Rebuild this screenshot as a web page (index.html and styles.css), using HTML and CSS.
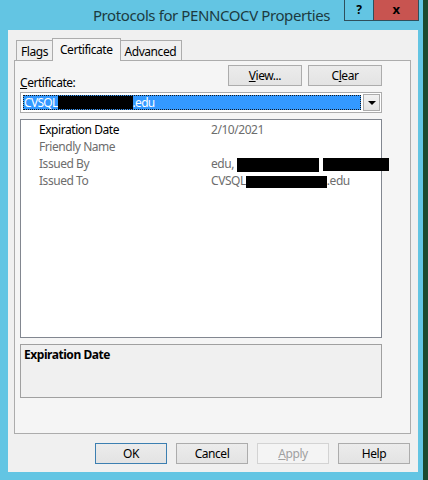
FILE: index.html
```html
<!DOCTYPE html>
<html lang="en">
<head>
    <meta charset="UTF-8">
    <title>Protocols for PENNCOCV Properties</title>
    <link rel="stylesheet" href="styles.css">
</head>
<body>
    <div class="window">
        <div class="titlebar">
            <span></span>
            <div class="title">Protocols for PENNCOCV Properties</div>
            <div class="caption-btns">
                <div class="cap cap-help">?</div>
                <div class="cap cap-close">x</div>
            </div>
        </div>

        <div class="client">
            <div class="tabs">
                <div class="tab">Flags</div>
                <div class="tab active">Certificate</div>
                <div class="tab">Advanced</div>
            </div>

            <div class="panel">
                <div class="top-row">
                    <label class="cert-label"><u>C</u>ertificate:</label>
                    <div class="top-btns">
                        <button class="btn"><u>V</u>iew...</button>
                        <button class="btn">C<u>l</u>ear</button>
                    </div>
                </div>

                <div class="combo">
                    <div class="combo-value">CVSQL<span class="redact r-combo"></span>.edu</div>
                    <div class="combo-arrow"><span class="tri"></span></div>
                </div>

                <!-- certificate fields -->
                <div class="list">
                    <div class="row row-selected">
                        <div class="field">Expiration Date</div>
                        <div class="value">2/10/2021</div>
                    </div>
                    <div class="row">
                        <div class="field">Friendly Name</div>
                        <div class="value"></div>
                    </div>
                    <div class="row">
                        <div class="field">Issued By</div>
                        <div class="value">edu, <span class="redact r-by1"></span><span class="redact r-by2"></span></div>
                    </div>
                    <div class="row">
                        <div class="field">Issued To</div>
                        <div class="value">CVSQL<span class="redact r-to"></span>.edu</div>
                    </div>
                </div>

                <div class="details">Expiration Date</div>
            </div>

            <div class="footer">
                <button class="btn btn-default">OK</button>
                <button class="btn">Cancel</button>
                <button class="btn" disabled><u>A</u>pply</button>
                <button class="btn">Help</button>
            </div>
        </div>
    </div>
</body>
</html>
```

FILE: styles.css
```css
body {
    margin: 0;
    background: #1d4a2e;
    font-family: "Segoe UI", "Noto Sans", sans-serif;
    font-size: 12px;
    letter-spacing: -0.45px;
    color: #000;
}

.window {
    width: 423px;
    height: 480px;
    box-sizing: border-box;
    background: #63c5e3;
    padding: 0 5px 8px 8px;
    display: flex;
    flex-direction: column;
}

.titlebar {
    height: 30px;
    margin: 0 -5px 0 -8px;
    display: grid;
    grid-template-columns: 1fr auto 1fr;
}

.title {
    align-self: center;
    font-size: 15px;
    letter-spacing: -0.4px;
    color: #1c3a40;
}

.caption-btns {
    display: flex;
    justify-content: flex-end;
    align-items: flex-start;
    padding-right: 4px;
}

.cap {
    height: 21px;
    box-sizing: border-box;
    border: 1px solid #2f4f5c;
    border-top: none;
    text-align: center;
    font-weight: bold;
    font-size: 12px;
    line-height: 19px;
}

.cap-help {
    width: 29px;
    background: #63c5e3;
    border-right: none;
}

.cap-close {
    width: 46px;
    background: #c85450;
    font-size: 13px;
}

.client {
    flex: 1;
    background: #f0f0f0;
    padding: 8px 7px 0 6px;
    display: flex;
    flex-direction: column;
}

.tabs {
    height: 22px;
    display: flex;
    align-items: flex-end;
    margin-left: 2px;
}

.tab {
    height: 20px;
    box-sizing: border-box;
    padding: 2px 5px 0 4px;
    border: 1px solid #acacac;
    border-bottom: none;
    margin-right: -1px;
    background: #f0f0f0;
    white-space: nowrap;
}

.tab.active {
    position: relative;
    z-index: 1;
    height: 23px;
    margin-bottom: -1px;
    padding: 2px 7px 0 7px;
    background: #f5f5f5;
    margin-left: -1px;
    margin-right: -1px;
}

.panel {
    height: 374px;
    box-sizing: border-box;
    border: 1px solid #acacac;
    background: #f5f5f5;
    padding: 4px 28px 0 5px;
}

.top-row {
    height: 21px;
    display: flex;
    justify-content: space-between;
    align-items: flex-end;
}

.cert-label {
    line-height: 14px;
    margin-bottom: -4px;
}

.top-btns {
    display: flex;
    gap: 6px;
}

.btn {
    width: 74px;
    height: 21px;
    box-sizing: border-box;
    border: 1px solid #acacac;
    background: linear-gradient(#ececec, #e3e3e3);
    font-family: inherit;
    font-size: 12px;
    letter-spacing: inherit;
    color: #000;
    padding: 0;
}

.btn-default {
    border-color: #3c7fb1;
}

.btn:disabled {
    color: #a0a0a0;
    border-color: #d3d3d3;
    background: #f4f4f4;
}

.combo {
    margin-top: 6px;
    height: 21px;
    box-sizing: border-box;
    border: 1px solid #acacac;
    background: #fff;
    display: flex;
    padding: 2px 1px 2px 2px;
}

.combo-value {
    flex: 1;
    background: #3399ff;
    color: #fff;
    border: 1px dotted #1a1a1a;
    line-height: 13px;
    letter-spacing: -0.7px;
    white-space: nowrap;
    overflow: hidden;
}

.combo-arrow {
    width: 17px;
    box-sizing: border-box;
    margin: -1px 0 -1px 2px;
    border: 1px solid #acacac;
    background: linear-gradient(#f2f2f2, #e3e3e3);
    display: flex;
    justify-content: center;
    align-items: center;
}

.tri {
    border-left: 4px solid transparent;
    border-right: 4px solid transparent;
    border-top: 4px solid #000;
}

.redact {
    display: inline-block;
    background: #000;
    vertical-align: middle;
}

.r-combo { width: 75px; height: 16px; margin-top: -3px; }
.r-by1 { width: 82px; height: 14px; }
.r-by2 { width: 66px; height: 13px; margin-left: 4px; }
.r-to { width: 81px; height: 12px; }

.list {
    margin-top: 6px;
    height: 219px;
    box-sizing: border-box;
    border: 1px solid #828790;
    background: #fff;
    padding-top: 1px;
}

.row {
    height: 17px;
    display: flex;
    align-items: center;
    color: #6d6d6d;
    white-space: nowrap;
}

.field {
    width: 172px;
    flex-shrink: 0;
    padding-left: 18px;
}

.row-selected .field {
    color: #000;
}

.details {
    margin-top: 6px;
    height: 54px;
    box-sizing: border-box;
    border: 1px solid #a0a0a0;
    background: #f0f0f0;
    padding: 1px 3px;
    font-weight: bold;
}

.footer {
    margin-top: 9px;
    display: flex;
    justify-content: flex-end;
    gap: 9px;
    padding-right: 1px;
}

.footer .btn {
    width: 72px;
}
```
